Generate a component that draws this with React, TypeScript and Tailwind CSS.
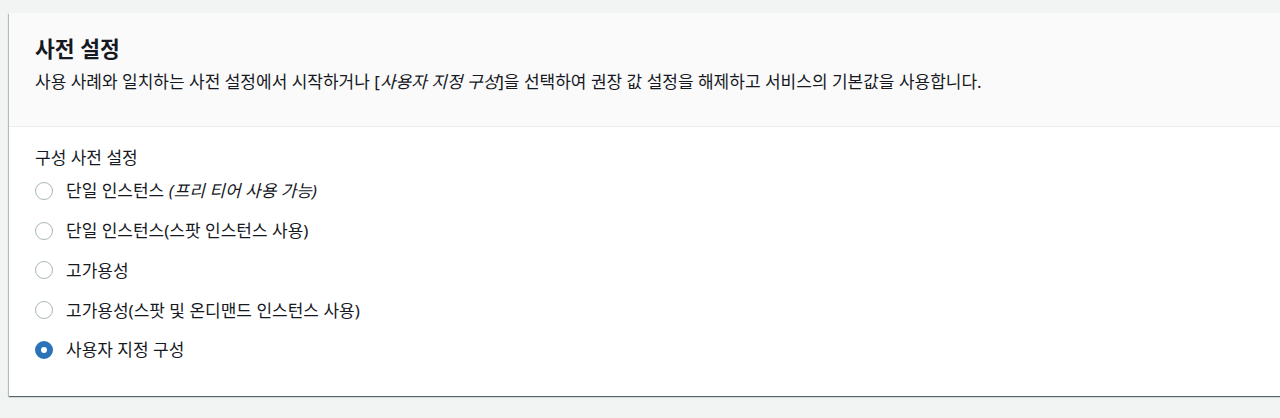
const options = [
    { id: "single", label: "단일 인스턴스", note: "(프리 티어 사용 가능)" },
    { id: "single-spot", label: "단일 인스턴스(스팟 인스턴스 사용)" },
    { id: "ha", label: "고가용성" },
    { id: "ha-spot", label: "고가용성(스팟 및 온디맨드 인스턴스 사용)" },
    { id: "custom", label: "사용자 지정 구성" },
];

const Radio = ({ checked }: { checked: boolean }) =>
    checked ? (
        <span className="block shrink-0 w-[18px] h-[18px] rounded-full border-[6px] border-[#2a73b8] bg-white" />
    ) : (
        <span className="block shrink-0 w-[18px] h-[18px] rounded-full border-[1.5px] border-[#aab7b8] bg-white" />
    );

export default function App() {
    const selected = "custom";

    return (
        <div
            className="h-[418px] overflow-hidden bg-[#f2f3f3] pt-[13px] pl-[9px] text-[#16191f]"
            style={{ fontFamily: '"Noto Sans", "Noto Sans CJK KR", sans-serif' }}
        >
            <div className="mr-[-40px] bg-white shadow-[0_1px_1px_0_rgba(0,28,36,0.45),-1px_1px_1px_0_rgba(0,28,36,0.2),1px_1px_1px_0_rgba(0,28,36,0.2)]">
                <div className="bg-[#fafafa] border-b border-[#eaeded] px-[26px] pt-[22px] pb-[33px]">
                    <h2 className="text-[21.5px] leading-[28px] font-bold">사전 설정</h2>
                    <p className="mt-[8px] text-[17px] leading-[22px]">
                        사용 사례와 일치하는 사전 설정에서 시작하거나 [<i>사용자 지정 구성</i>]을 선택하여 권장 값 설정을 해제하고 서비스의 기본값을 사용합니다.
                    </p>
                </div>

                <div className="px-[26px] pt-[20px] pb-[26px]">
                    <div className="text-[17px] leading-[22px] mb-[2px]">구성 사전 설정</div>
                    <div className="flex flex-col">
                        {options.map((o) => (
                            <label key={o.id} className="h-[39.8px] flex items-center gap-[13px] text-[17px]">
                                <Radio checked={o.id === selected} />
                                <span>
                                    {o.label}
                                    {o.note && <i> {o.note}</i>}
                                </span>
                            </label>
                        ))}
                    </div>
                </div>
            </div>
        </div>
    );
}
